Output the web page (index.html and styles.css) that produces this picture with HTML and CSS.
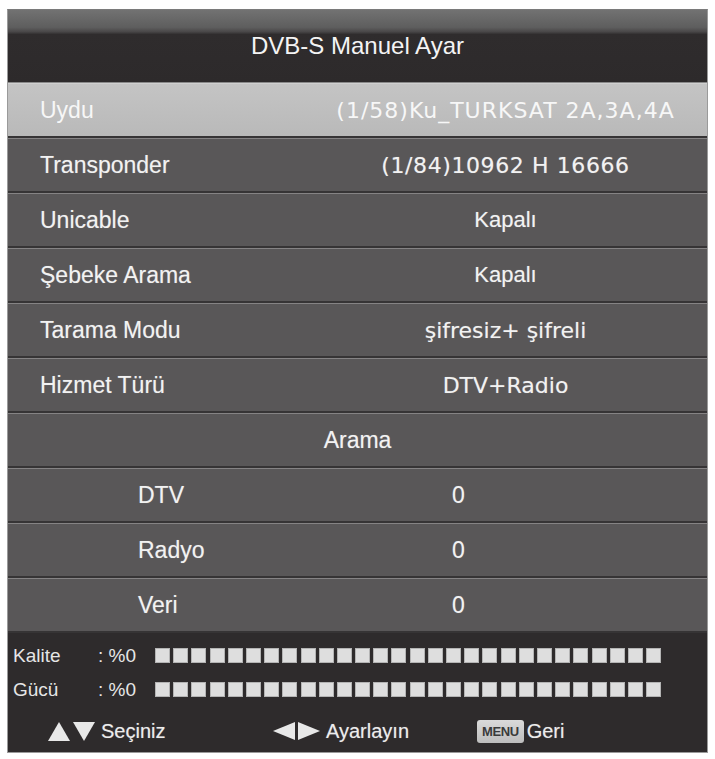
FILE: index.html
```html
<!DOCTYPE html>
<html lang="tr">
<head>
<meta charset="utf-8">
<title>DVB-S Manuel Ayar</title>
<link rel="stylesheet" href="styles.css">
</head>
<body>
<div class="osd">
  <div class="osd-title">DVB-S Manuel Ayar</div>
  <div class="row row--active"><span class="label">Uydu</span><span class="value value--sat">(1/58)Ku_TURKSAT 2A,3A,4A</span></div>
  <div class="row"><span class="label">Transponder</span><span class="value value--tp">(1/84)10962 H 16666</span></div>
  <div class="row"><span class="label">Unicable</span><span class="value value--narrow">Kapalı</span></div>
  <div class="row"><span class="label">Şebeke Arama</span><span class="value value--narrow">Kapalı</span></div>
  <div class="row"><span class="label">Tarama Modu</span><span class="value">şifresiz+ şifreli</span></div>
  <div class="row"><span class="label">Hizmet Türü</span><span class="value">DTV+Radio</span></div>
  <div class="row row--center">Arama</div>
  <div class="row row--sub"><span class="label">DTV</span><span class="value">0</span></div>
  <div class="row row--sub"><span class="label">Radyo</span><span class="value">0</span></div>
  <div class="row row--sub"><span class="label">Veri</span><span class="value">0</span></div>
  <div class="status">
    <div class="signal">
      <span class="sig-label">Kalite</span><span class="sig-pct">: %0</span>
      <div class="bar"><i></i><i></i><i></i><i></i><i></i><i></i><i></i><i></i><i></i><i></i><i></i><i></i><i></i><i></i><i></i><i></i><i></i><i></i><i></i><i></i><i></i><i></i><i></i><i></i><i></i><i></i><i></i><i></i></div>
    </div>
    <div class="signal">
      <span class="sig-label">Gücü</span><span class="sig-pct">: %0</span>
      <div class="bar"><i></i><i></i><i></i><i></i><i></i><i></i><i></i><i></i><i></i><i></i><i></i><i></i><i></i><i></i><i></i><i></i><i></i><i></i><i></i><i></i><i></i><i></i><i></i><i></i><i></i><i></i><i></i><i></i></div>
    </div>
    <div class="hints">
      <div class="hint">
        <svg class="tri" width="22" height="19" viewBox="0 0 22 19"><polygon points="11,0 22,19 0,19"/></svg>
        <svg class="tri" width="22" height="19" viewBox="0 0 22 19"><polygon points="0,0 22,0 11,19"/></svg>
        <span class="hint-text">Seçiniz</span>
      </div>
      <div class="hint">
        <svg class="tri" width="22" height="18" viewBox="0 0 22 18"><polygon points="22,0 22,18 0,9"/></svg>
        <svg class="tri" width="22" height="18" viewBox="0 0 22 18"><polygon points="0,0 22,9 0,18"/></svg>
        <span class="hint-text">Ayarlayın</span>
      </div>
      <div class="hint">
        <span class="key">MENU</span>
        <span class="hint-text">Geri</span>
      </div>
    </div>
  </div>
</div>
</body>
</html>
```
FILE: styles.css
```css
html, body {
  margin: 0;
  padding: 0;
  background: #ffffff;
}

body {
  padding: 9px 0 0 7px;
  font-family: "Liberation Sans", Arial, sans-serif;
  color: #f2f2f2;
}

.osd {
  width: 701px;
  height: 744px;
  box-sizing: border-box;
  display: flex;
  flex-direction: column;
  background: #2e2b2c;
  border: 1px solid #9a9a9a;
  border-top-color: #7a7a7a;
  overflow: hidden;
}

.osd-title {
  height: 72px;
  flex: none;
  display: flex;
  align-items: center;
  justify-content: center;
  font-size: 24px;
  color: #f4f4f4;
  background: linear-gradient(#727272 0%, #5e5e5e 24%, #4a4849 30%, #2f2c2d 34%, #2d2a2b 100%);
  border-bottom: 1px solid #8a8a8a;
}

.row {
  height: 55px;
  flex: none;
  box-sizing: border-box;
  display: flex;
  align-items: center;
  background: #595758;
  border-top: 1px solid #858384;
  border-bottom: 2px solid #363435;
  font-size: 23px;
  text-shadow: 0 0 1px rgba(255, 255, 255, 0.35);
}

.row--active {
  background: linear-gradient(#c4c4c4, #b9b9b9);
  border-top-color: #d0d0d0;
  color: #f7f7f7;
  text-shadow: none;
}

.label {
  width: 296px;
  flex: none;
  box-sizing: border-box;
  padding-left: 32px;
}

.value {
  flex: 1;
  text-align: center;
  font-family: "DejaVu Sans", Verdana, sans-serif;
  font-size: 22px;
}

.value--sat {
  letter-spacing: 1px;
  color: #f7f7f7;
}

.value--tp {
  letter-spacing: 0.6px;
}

.value--narrow {
  font-family: "Liberation Sans", Arial, sans-serif;
}

.row--center {
  justify-content: center;
}

.row--sub .label {
  width: 444px;
  padding-left: 130px;
}

.row--sub .value {
  text-align: left;
  font-family: "Liberation Sans", Arial, sans-serif;
  font-size: 23px;
}

.status {
  flex: 1;
  display: flex;
  flex-direction: column;
  padding-top: 13px;
  background: #2e2b2c;
}

.signal {
  height: 19px;
  display: flex;
  align-items: center;
  padding-left: 5px;
  font-size: 19px;
  color: #e6e6e6;
}

.signal + .signal {
  margin-top: 15px;
}

.sig-label {
  width: 85px;
  flex: none;
}

.sig-pct {
  width: 57px;
  flex: none;
}

.bar {
  display: flex;
  gap: 3.2px;
}

.bar i {
  width: 15px;
  height: 15px;
  box-sizing: border-box;
  background: #dedede;
  border: 1px solid #b4b4b4;
}

.hints {
  margin-top: 19px;
  height: 26px;
  display: grid;
  grid-template-columns: 225px 204px auto;
  align-items: center;
  padding-left: 40px;
}

.hint {
  display: flex;
  align-items: center;
}

.tri {
  fill: #e8e8e8;
  margin-right: 3px;
}

.hint-text {
  font-size: 20px;
  color: #ececec;
  margin-left: 3px;
  text-shadow: 0 0 1px rgba(255, 255, 255, 0.4);
}

.key {
  height: 23px;
  box-sizing: border-box;
  padding: 0 5px;
  display: flex;
  align-items: center;
  background: linear-gradient(#dadada, #bdbdbd);
  border-radius: 3px;
  color: #3a3a3a;
  font-size: 13px;
  font-weight: bold;
  letter-spacing: -0.4px;
}
```
